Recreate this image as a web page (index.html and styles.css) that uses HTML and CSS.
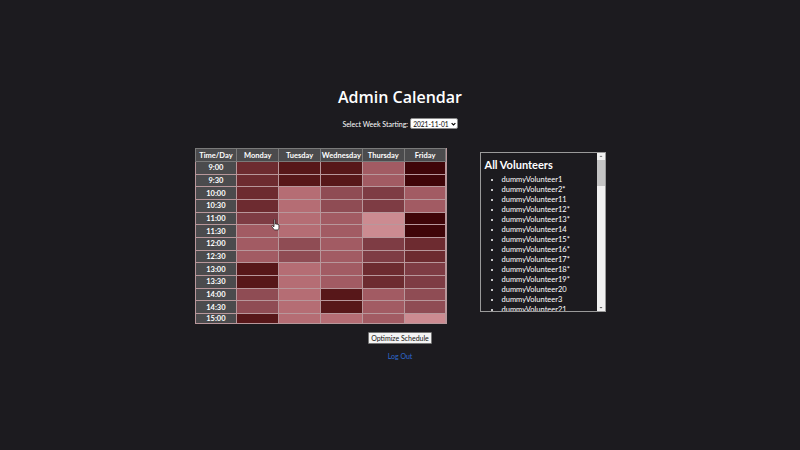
FILE: index.html
```html
<!DOCTYPE html>
<html>
<head>
<meta charset="utf-8">
<link rel="stylesheet" href="styles.css">
</head>
<body>
<div class="page">
  <h1 class="title">Admin Calendar</h1>
  <div class="week">
    <label class="week-label">Select Week Starting:</label>
    <span class="select">2021-11-01<svg class="chev" viewBox="0 0 8 6" width="5" height="4"><path d="M1 1.5 L4 4.5 L7 1.5" fill="none" stroke="#000" stroke-width="1.8"/></svg></span>
  </div>
  <div class="row">
    <div class="cal">
      <div class="hd">Time/Day</div><div class="hd">Monday</div><div class="hd">Tuesday</div><div class="hd">Wednesday</div><div class="hd">Thursday</div><div class="hd">Friday</div>
      <div class="tm">9:00</div><div class="c2"></div><div class="c1"></div><div class="c1"></div><div class="c5"></div><div class="c0"></div>
      <div class="tm">9:30</div><div class="c2"></div><div class="c1"></div><div class="c1"></div><div class="c5"></div><div class="c0"></div>
      <div class="tm">10:00</div><div class="c2"></div><div class="c6"></div><div class="c4"></div><div class="c3"></div><div class="c5"></div>
      <div class="tm">10:30</div><div class="c2"></div><div class="c6"></div><div class="c4"></div><div class="c3"></div><div class="c5"></div>
      <div class="tm">11:00</div><div class="c3 dots"></div><div class="c6"></div><div class="c5"></div><div class="c7"></div><div class="c0"></div>
      <div class="tm">11:30</div><div class="c5"></div><div class="c6"></div><div class="c5"></div><div class="c7"></div><div class="c0"></div>
      <div class="tm">12:00</div><div class="c5"></div><div class="c4"></div><div class="c5"></div><div class="c3"></div><div class="c2"></div>
      <div class="tm">12:30</div><div class="c5"></div><div class="c4"></div><div class="c5"></div><div class="c3"></div><div class="c2"></div>
      <div class="tm">13:00</div><div class="c1"></div><div class="c6"></div><div class="c5"></div><div class="c2"></div><div class="c3"></div>
      <div class="tm">13:30</div><div class="c1"></div><div class="c6"></div><div class="c5"></div><div class="c2"></div><div class="c3"></div>
      <div class="tm">14:00</div><div class="c4"></div><div class="c6"></div><div class="c1"></div><div class="c5"></div><div class="c4"></div>
      <div class="tm">14:30</div><div class="c4"></div><div class="c6"></div><div class="c1"></div><div class="c5"></div><div class="c4"></div>
      <div class="tm">15:00</div><div class="c1"></div><div class="c6"></div><div class="c6"></div><div class="c5"></div><div class="c7"></div>
    </div>
    <div class="vol">
      <div class="vol-content">
        <h2 class="vol-title">All Volunteers</h2>
        <ul class="vol-list">
          <li>dummyVolunteer1</li>
          <li>dummyVolunteer2*</li>
          <li>dummyVolunteer11</li>
          <li>dummyVolunteer12*</li>
          <li>dummyVolunteer13*</li>
          <li>dummyVolunteer14</li>
          <li>dummyVolunteer15*</li>
          <li>dummyVolunteer16*</li>
          <li>dummyVolunteer17*</li>
          <li>dummyVolunteer18*</li>
          <li>dummyVolunteer19*</li>
          <li>dummyVolunteer20</li>
          <li>dummyVolunteer3</li>
          <li>dummyVolunteer21</li>
        </ul>
      </div>
      <div class="sbar">
        <svg class="arrow" viewBox="0 0 8 6" width="8" height="6"><path d="M2.5 4 L4 2.5 L5.5 4 Z" fill="#777"/></svg>
        <div class="thumb"></div>
        <div class="track"></div>
        <svg class="arrow" viewBox="0 0 8 6" width="8" height="6"><path d="M2.5 2 L4 3.5 L5.5 2 Z" fill="#555"/></svg>
      </div>
    </div>
  </div>
  <button class="btn">Optimize Schedule</button>
  <a class="logout" href="#">Log Out</a>
  <svg class="cursor" viewBox="0 0 12 16" width="9" height="12"><path d="M4 1 C4 0.3 5.5 0.3 5.5 1 L5.5 7 L6 6.5 C6.2 5.8 7.3 5.8 7.5 6.5 L7.5 7.2 C7.7 6.6 8.8 6.6 9 7.3 L9 8 C9.2 7.4 10.5 7.4 10.5 8.2 L10.5 11.5 C10.5 13 9.5 14.5 9.5 14.5 L4.5 14.5 L1.2 10.2 C0.6 9.4 1.6 8.5 2.3 9.1 L4 10.6 Z" fill="#fff" stroke="#000" stroke-width="0.8"/></svg>
</div>
</body>
</html>
```
FILE: styles.css
```css
html, body {
  margin: 0;
  padding: 0;
  background: #1c1b1f;
  color: #ffffff;
  font-family: Lato, "Open Sans", sans-serif;
}
.page {
  position: relative;
  display: flex;
  flex-direction: column;
  align-items: center;
  padding-top: 85px;
  height: 365px;
}
.title {
  margin: 0;
  font-family: "Open Sans", Lato, sans-serif;
  font-size: 16px;
  line-height: 24px;
  font-weight: 600;
}
.week {
  margin-top: 9px;
  display: flex;
  align-items: center;
  height: 11px;
  font-size: 7px;
}
.week-label {
  margin-right: 2px;
}
.select {
  display: flex;
  align-items: center;
  gap: 2px;
  box-sizing: border-box;
  height: 11px;
  padding: 0 1px 0 2px;
  background: #fff;
  color: #000;
  border: 1px solid #8a8a8a;
  border-radius: 2px;
  font-size: 6.6px;
  white-space: nowrap;
}
.chev {
  flex: none;
}
.row {
  margin-top: 19px;
  display: flex;
  align-items: flex-start;
  gap: 33px;
}
.cal {
  box-sizing: border-box;
  width: 252px;
  height: 176px;
  display: grid;
  grid-template-columns: repeat(6, 1fr);
  grid-template-rows: 12px repeat(12, 1fr);
  gap: 1px;
  padding: 1px;
  background: #b8979b;
}
.hd, .tm {
  background: #4b4b4d;
  color: #fff;
  font-size: 7.5px;
  font-weight: 700;
  display: flex;
  align-items: center;
  justify-content: center;
}
.hd {
  outline: 1px solid #7a7a7a;
}
.c0 { background: #3f0508; }
.c1 { background: #571719; }
.c2 { background: #6d2b30; }
.c3 { background: #7e3c44; }
.c4 { background: #8f4c54; }
.c5 { background: #a25b63; }
.c6 { background: #b56d74; }
.c7 { background: #cc8b91; }
.dots {
  background-image: radial-gradient(#965058 0.5px, transparent 0.6px);
  background-size: 2px 2px;
}
.vol {
  margin-top: 4px;
  box-sizing: border-box;
  width: 126px;
  height: 160px;
  border: 1px solid #9a9a9a;
  display: flex;
}
.vol-content {
  flex: 1;
  overflow: hidden;
}
.sbar {
  width: 8px;
  display: flex;
  flex-direction: column;
  background: #f1f1f1;
}
.arrow {
  display: block;
  flex: none;
}
.thumb {
  margin-top: 1px;
  height: 26px;
  background: #c4c4c4;
}
.track {
  flex: 1;
}
.vol-title {
  margin: 4px 0 0 4px;
  font-size: 11px;
  line-height: 15px;
  font-weight: 700;
}
.vol-list {
  margin: 3px 0 0 0;
  padding-left: 21px;
  font-size: 7.5px;
  line-height: 10px;
}
.btn {
  margin-top: 8px;
  height: 12px;
  padding: 0 2px;
  font-family: Lato, "Open Sans", sans-serif;
  font-size: 7px;
  line-height: 10px;
  background: #f4f4f4;
  color: #111;
  border: 1px solid #767676;
  border-radius: 1px;
}
.logout {
  margin-top: 7px;
  font-size: 7px;
  line-height: 10px;
  color: #2f6ad0;
  text-decoration: none;
}
.cursor {
  position: absolute;
  left: 271px;
  top: 219px;
}
```
